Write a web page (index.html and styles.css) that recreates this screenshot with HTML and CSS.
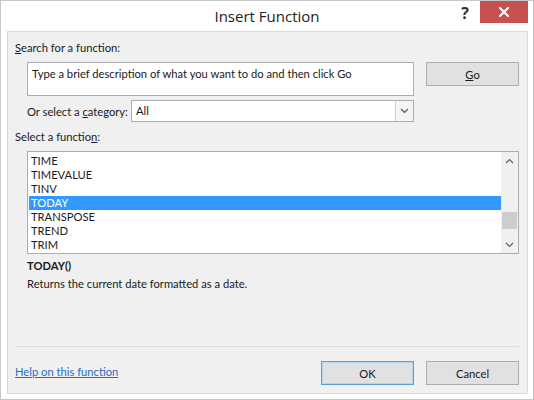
FILE: index.html
```html
<!DOCTYPE html>
<html>
<head>
<meta charset="utf-8">
<title>Insert Function</title>
<link rel="stylesheet" href="styles.css">
</head>
<body>
<div class="window">
  <div class="titlebar">
    <div class="tb-spacer"></div>
    <div class="title">Insert Function</div>
    <div class="tb-controls">
      <span class="help">?</span>
      <span class="close">
        <svg width="10" height="10" viewBox="0 0 10 10"><path d="M1 1 L9 9 M9 1 L1 9" stroke="#fff" stroke-width="2" stroke-linecap="square"/></svg>
      </span>
    </div>
  </div>
  <div class="panel">
    <div class="label"><u>S</u>earch for a function:</div>
    <div class="search-row">
      <div class="search-box">Type a brief description of what you want to do and then click Go</div>
      <div class="btn go"><u>G</u>o</div>
    </div>
    <div class="cat-row">
      <span class="cat-label">Or select a <u>c</u>ategory:</span>
      <div class="select">
        <span class="select-value">All</span>
        <span class="select-arrow">
          <svg width="9" height="6" viewBox="0 0 9 6"><path d="M1 1 L4.5 4.5 L8 1" fill="none" stroke="#555" stroke-width="1.2"/></svg>
        </span>
      </div>
    </div>
    <div class="label label2">Select a functio<u>n</u>:</div>
    <div class="listbox">
      <div class="items">
        <div class="item">TIME</div>
        <div class="item">TIMEVALUE</div>
        <div class="item">TINV</div>
        <div class="item selected">TODAY</div>
        <div class="item">TRANSPOSE</div>
        <div class="item">TREND</div>
        <div class="item">TRIM</div>
      </div>
      <div class="scrollbar">
        <span class="sb-arrow">
          <svg width="9" height="6" viewBox="0 0 9 6"><path d="M1 5 L4.5 1.5 L8 5" fill="none" stroke="#606060" stroke-width="1.2"/></svg>
        </span>
        <div class="sb-track"><div class="sb-thumb"></div></div>
        <span class="sb-arrow">
          <svg width="9" height="6" viewBox="0 0 9 6"><path d="M1 1 L4.5 4.5 L8 1" fill="none" stroke="#606060" stroke-width="1.2"/></svg>
        </span>
      </div>
    </div>
    <div class="fn-sig">TODAY()</div>
    <div class="fn-desc">Returns the current date formatted as a date.</div>
    <div class="spacer"></div>
    <div class="separator"></div>
    <div class="footer">
      <a class="help-link" href="#">Help on this function</a>
      <div class="footer-btns">
        <div class="btn ok">OK</div>
        <div class="btn">Cancel</div>
      </div>
    </div>
  </div>
</div>
</body>
</html>
```
FILE: styles.css
```css
* { box-sizing: border-box; }
html, body { margin: 0; padding: 0; }
body {
  background: #ffffff;
  font-family: Lato, "Open Sans", sans-serif;
  font-size: 11.2px;
  color: #1a1a1a;
}
u { text-decoration: underline; text-underline-offset: 1px; }
.window {
  width: 534px;
  height: 400px;
  border: 1px solid #c8c8c8;
  background: #ffffff;
  display: flex;
  flex-direction: column;
}
.titlebar {
  height: 30px;
  display: grid;
  grid-template-columns: 1fr auto 1fr;
  align-items: start;
}
.title {
  font-family: "Open Sans", sans-serif;
  font-size: 15px;
  line-height: 30px;
  color: #222;
}
.tb-controls {
  display: flex;
  justify-content: flex-end;
  align-items: flex-start;
  padding-right: 5px;
}
.help {
  font-family: "Open Sans", sans-serif;
  font-size: 16px;
  font-weight: bold;
  color: #333;
  line-height: 20px;
  margin-top: 2px;
  margin-right: 11px;
}
.close {
  width: 48px;
  height: 22px;
  background: #c75050;
  display: flex;
  align-items: center;
  justify-content: center;
}
.panel {
  flex: 1;
  margin: 0 5px 5px 6px;
  background: #f0f0f0;
  border: 1px solid #d9d9d9;
  display: flex;
  flex-direction: column;
  padding: 8px 8px 8px 7px;
}
.label {
  line-height: 16px;
  height: 16px;
}
.search-row {
  display: flex;
  align-items: flex-start;
  gap: 12px;
  margin-top: 6px;
  padding-left: 12px;
}
.search-box {
  width: 387px;
  height: 34px;
  background: #fff;
  border: 1px solid #abadb3;
  padding: 3px 4px;
  line-height: 16px;
}
.btn {
  width: 93px;
  height: 24px;
  background: #e1e1e1;
  border: 1px solid #adadad;
  display: flex;
  align-items: center;
  justify-content: center;
}
.cat-row {
  display: flex;
  align-items: center;
  margin-top: 4px;
  padding-left: 12px;
}
.cat-label {
  width: 104px;
  white-space: nowrap;
}
.select {
  width: 283px;
  height: 22px;
  background: #fff;
  border: 1px solid #abadb3;
  display: flex;
}
.select-value {
  flex: 1;
  padding-left: 4px;
  line-height: 20px;
}
.select-arrow {
  width: 18px;
  border-left: 1px solid #d0d0d0;
  background: #f5f5f5;
  display: flex;
  align-items: center;
  justify-content: center;
}
.label2 { margin-top: 7px; }
.listbox {
  margin-top: 6px;
  margin-left: 12px;
  width: 492px;
  height: 103px;
  background: #fff;
  border: 1px solid #abadb3;
  display: flex;
}
.items {
  flex: 1;
  padding: 2px 0 0 1px;
}
.item {
  height: 14px;
  line-height: 14px;
  padding-left: 2px;
  color: #1a1a1a;
}
.item.selected {
  background: #3399ff;
  color: #fff;
}
.scrollbar {
  width: 17px;
  background: #f0f0f0;
  display: flex;
  flex-direction: column;
}
.sb-arrow {
  height: 17px;
  display: flex;
  align-items: center;
  justify-content: center;
}
.sb-track {
  flex: 1;
  display: flex;
  flex-direction: column;
  justify-content: flex-end;
  padding-bottom: 7px;
}
.sb-thumb {
  height: 17px;
  margin: 0 1px;
  background: #cdcdcd;
}
.fn-sig {
  margin-top: 4px;
  padding-left: 12px;
  font-weight: bold;
  line-height: 16px;
}
.fn-desc {
  margin-top: 2px;
  padding-left: 12px;
  line-height: 16px;
}
.spacer { flex: 1; }
.separator {
  height: 1px;
  background: #dcdcdc;
}
.footer {
  margin-top: 14px;
  display: flex;
  justify-content: space-between;
  align-items: center;
}
.help-link {
  color: #1f6fc5;
  text-decoration: underline;
  margin-top: -4px;
}
.footer-btns {
  display: flex;
  gap: 12px;
}
.btn.ok {
  border-color: #5a9ee0;
  box-shadow: inset 0 0 0 1px #b6d3f0;
}
```
